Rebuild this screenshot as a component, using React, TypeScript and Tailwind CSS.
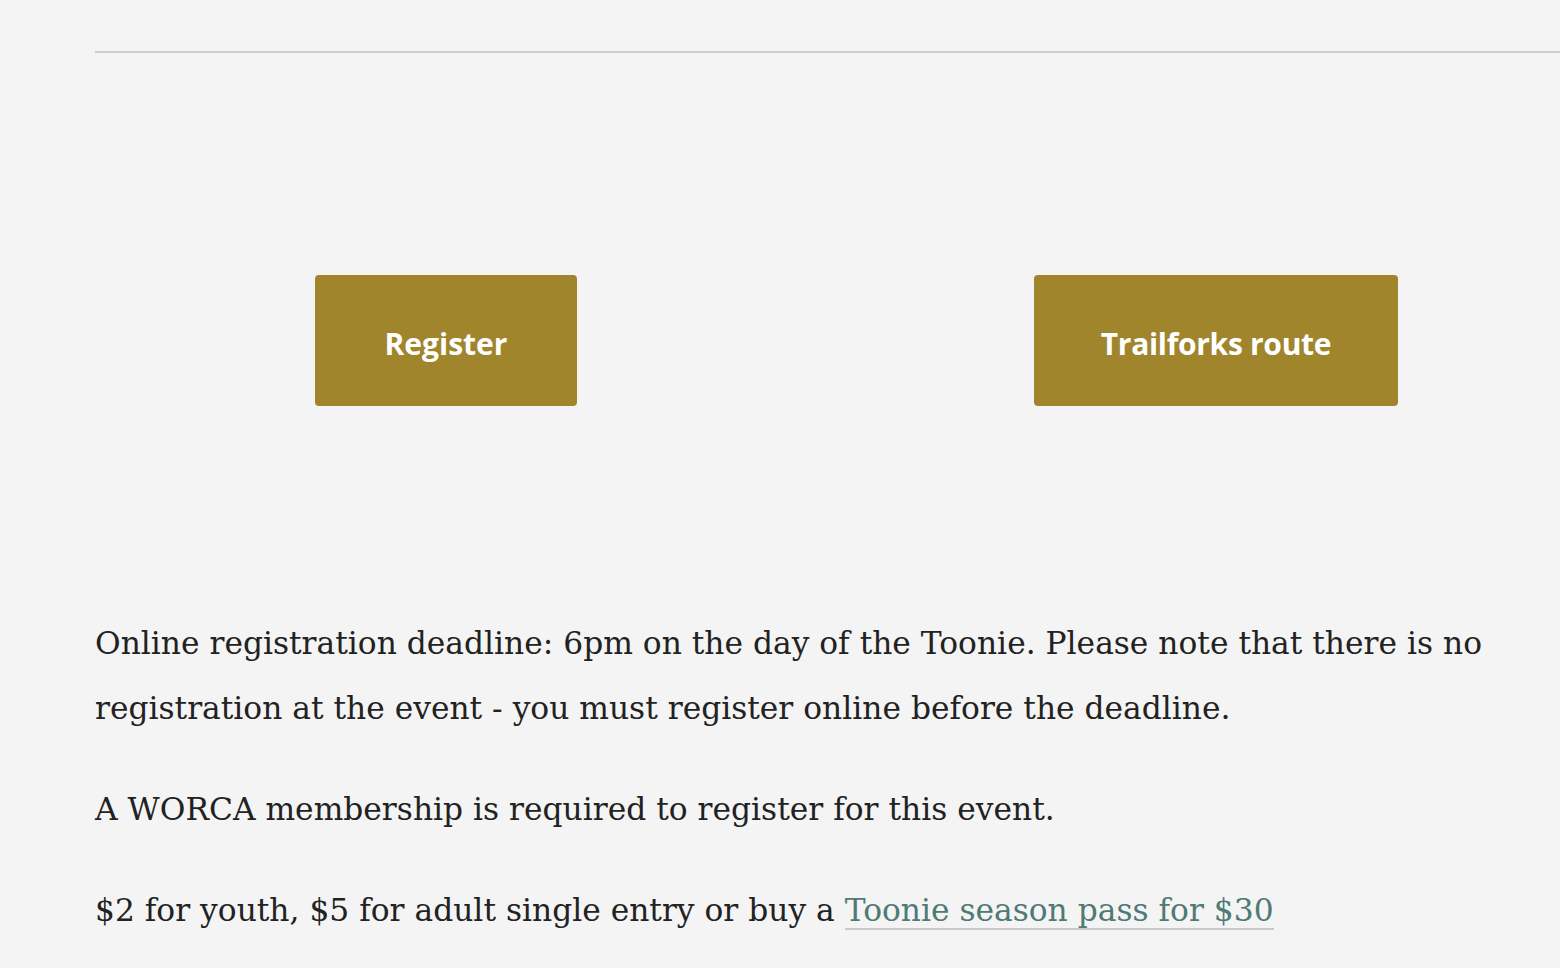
import React from "react";

export default function App() {
  return (
    <div className="min-h-screen w-full overflow-hidden bg-[#f4f4f4]">
      <div className="w-[1472px] ml-[95px] pt-[51px]">
        <hr className="border-0 border-t-2 border-[#cccccc]" />
        <div className="grid grid-cols-2 gap-[68px] mt-[222px]">
          <div className="flex justify-center">
            <a
              href="#"
              className="flex h-[131px] w-[262px] items-center justify-center rounded-[4px] bg-[#a0852c] pt-[6px] text-[30px] font-bold text-white"
              style={{ fontFamily: "'Open Sans', Lato, sans-serif" }}
            >
              Register
            </a>
          </div>
          <div className="flex justify-center">
            <a
              href="#"
              className="flex h-[131px] w-[364px] items-center justify-center rounded-[4px] bg-[#a0852c] pt-[6px] text-[30px] font-bold tracking-[-0.3px] text-white"
              style={{ fontFamily: "'Open Sans', Lato, sans-serif" }}
            >
              Trailforks route
            </a>
          </div>
        </div>
        <div
          className="mt-[205px] w-[1400px] text-[31.3px] leading-[65px] text-[#222222]"
          style={{ fontFamily: "'DejaVu Serif', 'Liberation Serif', serif" }}
        >
          <p>
            Online registration deadline: 6pm on the day of the Toonie. Please note that there is no registration at the event - you must register online before the deadline.
          </p>
          <p className="mt-[36px]">A WORCA membership is required to register for this event.</p>
          <p className="mt-[36px]">
            $2 for youth, $5 for adult single entry or buy a{" "}
            <a href="#" className="border-b-2 border-[#c3cccb] text-[#4f7a75]">
              Toonie season pass for $30
            </a>
          </p>
        </div>
      </div>
    </div>
  );
}
